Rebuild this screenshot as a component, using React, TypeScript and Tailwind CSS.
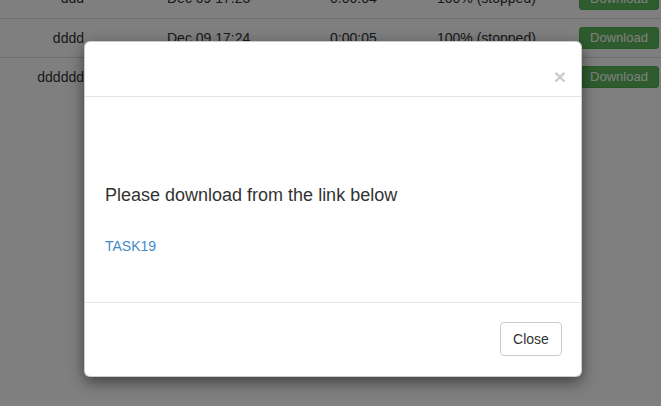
import React from "react";

const rows = [
  { name: "ddd", date: "Dec 09 17:23", dur: "0:00:04", status: "100% (stopped)" },
  { name: "dddd", date: "Dec 09 17:24", dur: "0:00:05", status: "100% (stopped)" },
  { name: "dddddd", date: "Dec 09 17:25", dur: "0:00:03", status: "100% (stopped)" },
];

export default function App() {
  return (
    <div className="relative h-[406px] w-[661px] overflow-hidden bg-white font-['Liberation_Sans',Arial,sans-serif] text-[14px] text-[#333]">
      {/* task table behind the dialog */}
      <div className="mt-[-21px]">
        {rows.map((r, i) => (
          <div
            key={r.name}
            className={`flex h-[39px] items-center ${i > 0 ? "border-t border-[#ddd]" : ""}`}
          >
            <div className="w-[84px] text-right">{r.name}</div>
            <div className="ml-[83px] w-[163px]">{r.date}</div>
            <div className="w-[107px]">{r.dur}</div>
            <div className="w-[142px]">{r.status}</div>
            <button className="flex h-[22px] w-[80px] items-center justify-center rounded-[3px] border border-[#4cae4c] bg-[#5cb85c] text-[13px] text-white">
              Download
            </button>
          </div>
        ))}
      </div>

      {/* backdrop */}
      <div className="absolute inset-0 bg-black/50" />

      {/* modal */}
      <div className="absolute left-[84px] top-[41px] w-[498px] rounded-[6px] border border-black/20 bg-white shadow-[0_5px_15px_rgba(0,0,0,0.5)]">
        <div className="flex h-[55px] justify-end border-b border-[#e5e5e5] px-[15px] pt-[14px]">
          <button className="text-[21px] font-bold leading-none text-black opacity-20">×</button>
        </div>
        <div className="h-[205px] px-5 pt-[88px]">
          <h4 className="text-[18px] leading-[20px] text-[#333]">Please download from the link below</h4>
          <a className="mt-[31px] block leading-[20px] text-[#428bca]">TASK19</a>
        </div>
        <div className="flex justify-end border-t border-[#e5e5e5] pb-5 pl-5 pr-[19px] pt-[19px]">
          <button className="h-[34px] w-[62px] rounded-[4px] border border-[#ccc] bg-white text-[14px] text-[#333]">
            Close
          </button>
        </div>
      </div>
    </div>
  );
}
